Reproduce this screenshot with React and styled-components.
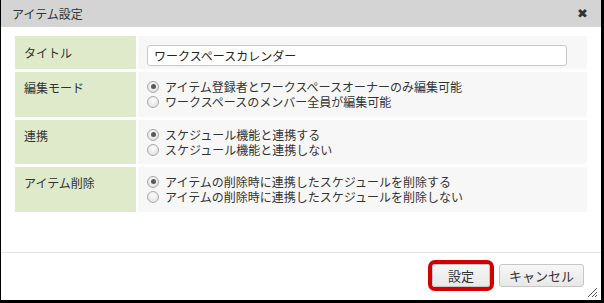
import { Fragment } from "react";
import styled, { createGlobalStyle } from "styled-components";

const GlobalStyle = createGlobalStyle`
  html, body {
    margin: 0;
    padding: 0;
    background: #000;
  }
  body {
    font-family: "Noto Sans CJK JP", "Noto Sans", sans-serif;
    color: #333;
  }
`;

const Backdrop = styled.div`
  width: 604px;
  height: 303px;
  box-sizing: border-box;
  padding: 0 3px 3px 1px;
  background: #000;
`;

const Dialog = styled.div`
  position: relative;
  width: 600px;
  height: 300px;
  background: #fff;
  display: flex;
  flex-direction: column;
`;

const Header = styled.div`
  height: 27px;
  flex-shrink: 0;
  background: #d4d4d4;
  display: flex;
  align-items: center;
  justify-content: space-between;
  padding: 0 13px 0 11px;
`;

const Title = styled.span`
  font-size: 12px;
  color: #333;
`;

const CloseButton = styled.span`
  font-family: "DejaVu Sans", sans-serif;
  font-size: 13px;
  font-weight: bold;
  color: #333;
  cursor: pointer;
`;

const Body = styled.div`
  height: 225px;
  box-sizing: border-box;
  padding: 9px 14px 0 14px;
`;

const FormGrid = styled.div`
  display: grid;
  grid-template-columns: 121px 1fr;
  column-gap: 2px;
  row-gap: 3px;
`;

const Label = styled.div`
  background: #deeaca;
  font-size: 12px;
  line-height: 18px;
  padding: ${(p) => (p.$tall ? "7px" : "8px")} 9px 0 9px;
  min-height: ${(p) => p.$height}px;
  box-sizing: border-box;
`;

const Value = styled.div`
  background: #f7f7f7;
  padding: ${(p) => p.$pad} 9px 0 9px;
  min-height: ${(p) => p.$height}px;
  box-sizing: border-box;
`;

const TextInput = styled.input`
  width: 420px;
  height: 21px;
  box-sizing: border-box;
  border: 1px solid #c8c8c8;
  border-radius: 3px;
  padding: 0 6px;
  font-family: inherit;
  font-size: 12px;
  color: #222;
  background: #fff;
  outline: none;
`;

const RadioList = styled.div`
  display: flex;
  flex-direction: column;
`;

const RadioRow = styled.label`
  display: flex;
  align-items: center;
  height: 15px;
  line-height: 15px;
  font-size: 12px;
  color: #333;
  cursor: pointer;
  white-space: nowrap;
`;

const RadioDot = styled.span`
  width: 10px;
  height: 10px;
  border-radius: 50%;
  border: 1px solid #a9a9a9;
  background: radial-gradient(circle at 50% 35%, #fdfdfd, #dcdcdc);
  margin: 0 6px 0 0;
  display: inline-flex;
  align-items: center;
  justify-content: center;
  flex-shrink: 0;

  &::after {
    content: "";
    width: 5px;
    height: 5px;
    border-radius: 50%;
    background: ${(p) => (p.$checked ? "#5a5a5a" : "transparent")};
  }
`;

const Footer = styled.div`
  flex: 1;
  border-top: 1px solid #e3e3e3;
  display: flex;
  align-items: center;
  justify-content: flex-end;
  gap: 9px;
  padding: 0 17px 3px 0;
`;

const Button = styled.button`
  height: 23px;
  padding: 0 ${(p) => p.$px}px;
  font-family: inherit;
  font-size: 13px;
  color: #333;
  background: linear-gradient(#f6f6f6, #e8e8e8);
  border: 1px solid #c6c6c6;
  border-radius: 3px;
  cursor: pointer;
  box-shadow: ${(p) => (p.$highlight ? "0 0 0 4px #d40000" : "none")};
  margin-top: 1px;
`;

const Grip = styled.svg`
  position: absolute;
  right: 3px;
  bottom: 2px;
`;

const rows = [
  {
    label: "編集モード",
    options: [
      "アイテム登録者とワークスペースオーナーのみ編集可能",
      "ワークスペースのメンバー全員が編集可能",
    ],
    height: 45,
  },
  {
    label: "連携",
    options: ["スケジュール機能と連携する", "スケジュール機能と連携しない"],
    height: 44,
  },
  {
    label: "アイテム削除",
    options: [
      "アイテムの削除時に連携したスケジュールを削除する",
      "アイテムの削除時に連携したスケジュールを削除しない",
    ],
    height: 45,
  },
];

const App = () => {
  return (
    <Backdrop>
      <GlobalStyle />
      <Dialog>
        <Header>
          <Title>アイテム設定</Title>
          <CloseButton>✖</CloseButton>
        </Header>
        <Body>
          <FormGrid>
            <Label $height={33}>タイトル</Label>
            <Value $height={33} $pad="6px">
              <TextInput defaultValue="ワークスペースカレンダー" />
            </Value>
            {rows.map((row) => (
              <Fragment key={row.label}>
                <Label $height={row.height} $tall>
                  {row.label}
                </Label>
                <Value $height={row.height} $pad="7px">
                  <RadioList>
                    {row.options.map((opt, i) => (
                      <RadioRow key={opt}>
                        <RadioDot $checked={i === 0} />
                        {opt}
                      </RadioRow>
                    ))}
                  </RadioList>
                </Value>
              </Fragment>
            ))}
          </FormGrid>
        </Body>
        <Footer>
          <Button $highlight $px={15}>設定</Button>
          <Button $px={9}>キャンセル</Button>
        </Footer>
        <Grip width="11" height="11" viewBox="0 0 11 11">
          <path d="M10 1 L1 10 M10 5 L5 10 M10 8 L8 10" stroke="#555" strokeWidth="1" />
        </Grip>
      </Dialog>
    </Backdrop>
  );
};

export default App;
